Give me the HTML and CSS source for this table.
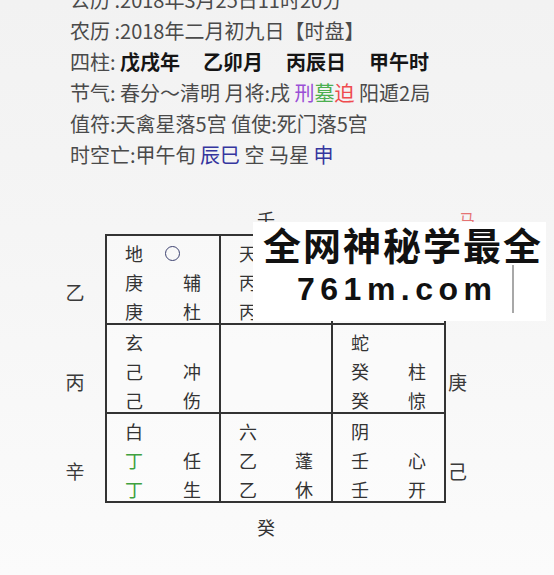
FILE: index.html
```html
<!DOCTYPE html>
<html lang="zh-CN">
<head>
<meta charset="utf-8">
<title>奇门排盘</title>
<link rel="stylesheet" href="styles.css">
</head>
<body>
<div class="page">
  <div class="info">
    <div class="line">公历 :2018年3月25日11时20分</div>
    <div class="line">农历 :2018年二月初九日【时盘】</div>
    <div class="line">四柱: <span class="pillar">戊戌年</span><span class="pillar">乙卯月</span><span class="pillar">丙辰日</span><span class="pillar">甲午时</span></div>
    <div class="line">节气: 春分～清明 月将:戌 <span class="c-purple">刑</span><span class="c-green">墓</span><span class="c-red">迫</span> 阳遁2局</div>
    <div class="line">值符:天禽星落5宫 值使:死门落5宫</div>
    <div class="line">时空亡:甲午旬 <span class="c-blue">辰巳</span> 空 马星 <span class="c-blue">申</span></div>
  </div>

  <div class="board">
    <div class="edge-row top">
      <div class="edge-cell c1"></div>
      <div class="edge-cell c2">壬</div>
      <div class="edge-cell c3"></div>
      <div class="edge-cell side ma">马</div>
    </div>

    <div class="middle">
      <div class="side-col left">
        <div class="side-label first">乙</div>
        <div class="side-label">丙</div>
        <div class="side-label">辛</div>
      </div>

      <div class="grid">
        <div class="cell c1">
          <div class="gl">地<span class="ring"></span></div><div class="gr"></div>
          <div class="gl">庚</div><div class="gr">辅</div>
          <div class="gl">庚</div><div class="gr">杜</div>
        </div>
        <div class="cell c2">
          <div class="gl">天</div><div class="gr"></div>
          <div class="gl">丙</div><div class="gr">英</div>
          <div class="gl">丙</div><div class="gr">景</div>
        </div>
        <div class="cell c3">
          <div class="gl">符</div><div class="gr"></div>
          <div class="gl">辛</div><div class="gr">芮</div>
          <div class="gl">辛</div><div class="gr">死</div>
        </div>

        <div class="cell c1">
          <div class="gl">玄</div><div class="gr"></div>
          <div class="gl">己</div><div class="gr">冲</div>
          <div class="gl">己</div><div class="gr">伤</div>
        </div>
        <div class="cell c2"></div>
        <div class="cell c3">
          <div class="gl">蛇</div><div class="gr"></div>
          <div class="gl">癸</div><div class="gr">柱</div>
          <div class="gl">癸</div><div class="gr">惊</div>
        </div>

        <div class="cell c1">
          <div class="gl">白</div><div class="gr"></div>
          <div class="gl c-ding">丁</div><div class="gr">任</div>
          <div class="gl c-ding">丁</div><div class="gr">生</div>
        </div>
        <div class="cell c2">
          <div class="gl">六</div><div class="gr"></div>
          <div class="gl">乙</div><div class="gr">蓬</div>
          <div class="gl">乙</div><div class="gr">休</div>
        </div>
        <div class="cell c3">
          <div class="gl">阴</div><div class="gr"></div>
          <div class="gl">壬</div><div class="gr">心</div>
          <div class="gl">壬</div><div class="gr">开</div>
        </div>
      </div>

      <div class="side-col right">
        <div class="side-label first"></div>
        <div class="side-label">庚</div>
        <div class="side-label">己</div>
      </div>
    </div>

    <div class="edge-row bottom">
      <div class="edge-cell c1"></div>
      <div class="edge-cell c2">癸</div>
      <div class="edge-cell c3"></div>
    </div>
  </div>

  <div class="watermark">
    <div class="wm-title">全网神秘学最全</div>
    <div class="wm-url">761m.com</div>
    <div class="wm-caret"></div>
  </div>
</div>
</body>
</html>
```

FILE: styles.css
```css
* {
  box-sizing: border-box;
}

html, body {
  margin: 0;
  padding: 0;
}

body {
  width: 554px;
  height: 575px;
  overflow: hidden;
  font-family: "Noto Sans CJK SC", "Noto Sans", sans-serif;
  background: linear-gradient(180deg, #f2f2f2 0%, #f5f5f5 40%, #fbfbfb 100%);
  color: #333;
}

.page {
  position: relative;
  display: flow-root;
  width: 554px;
  height: 575px;
}

/* ---------- info lines ---------- */
.info {
  margin-top: -16px;
  padding-left: 70px;
  font-size: 20px;
  line-height: 31px;
  color: #4a4a4a;
  white-space: nowrap;
}

.pillar {
  display: inline-block;
  font-weight: bold;
  color: #151515;
  margin-right: 23px;
}

.c-purple { color: #9a4fd6; }
.c-green { color: #4caf50; }
.c-red { color: #ef4b4f; }
.c-blue { color: #35369e; }

/* ---------- board ---------- */
.board {
  margin-top: 35px;
  padding-left: 57px;
  font-size: 18px;
  line-height: 29px;
  color: #333;
}

.edge-row {
  display: flex;
  margin-left: 48px;
  height: 29px;
}

.edge-row.bottom {
  margin-top: 10px;
}

.edge-cell.c1 { width: 114px; }
.edge-cell.c2 {
  width: 112px;
  text-align: center;
  padding-right: 18px;
}
.edge-cell.c3 { width: 113px; }
.edge-cell.side { width: 40px; }
.edge-cell.ma {
  padding-left: 15px;
  color: #e57373;
  font-size: 16px;
}

.middle {
  display: flex;
}

.side-col {
  display: flex;
  flex-direction: column;
}

.side-col.left {
  width: 36px;
  margin-right: 12px;
  text-align: center;
}

.side-col.right {
  width: 40px;
  padding-left: 2px;
}

.side-label {
  height: 89px;
  display: flex;
  align-items: center;
  padding-top: 24px;
  font-size: 19px;
  color: #3a3a3a;
}

.side-col.left .side-label {
  justify-content: center;
}

.side-label.first {
  height: 91px;
}

.grid {
  display: grid;
  grid-template-columns: 114px 112px 113px;
  grid-template-rows: 89px 89px 89px;
  border-left: 2px solid #333;
  border-top: 2px solid #333;
}

.cell {
  border-right: 2px solid #333;
  border-bottom: 2px solid #333;
  padding: 3px 18px 0 18px;
  display: grid;
  grid-template-columns: 1fr auto;
  grid-auto-rows: 29px;
  align-content: start;
  background: rgba(255, 255, 255, 0.35);
}

.gl {
  display: flex;
  align-items: center;
}

.gr {
  text-align: right;
}

.c-ding {
  color: #3fa13f;
}

.ring {
  display: inline-block;
  width: 15px;
  height: 15px;
  margin-left: 22px;
  border: 1.5px solid #3d4270;
  border-radius: 50%;
}

/* ---------- watermark overlay ---------- */
.watermark {
  position: absolute;
  left: 253px;
  top: 222px;
  width: 293px;
  height: 99px;
  background: #ffffff;
}

.wm-title {
  padding-left: 10px;
  margin-top: 1px;
  font-size: 38px;
  line-height: 42px;
  font-weight: bold;
  letter-spacing: 2px;
  color: #111;
  white-space: nowrap;
}

.wm-url {
  padding-left: 44px;
  margin-top: 4px;
  font-family: "Liberation Sans", Arial, sans-serif;
  font-size: 32px;
  line-height: 40px;
  font-weight: bold;
  letter-spacing: 5.5px;
  color: #111;
  white-space: nowrap;
}

.wm-caret {
  position: absolute;
  left: 259px;
  top: 43px;
  width: 2px;
  height: 48px;
  background: #a8a8a8;
}
```
